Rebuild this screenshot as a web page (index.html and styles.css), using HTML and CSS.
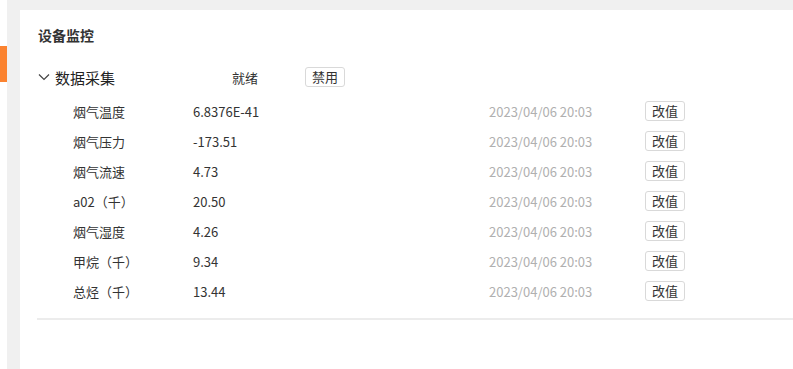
FILE: index.html
```html
<!doctype html>
<html lang="zh-CN">
  <head>
    <meta charset="UTF-8" />
    <meta name="viewport" content="width=device-width, initial-scale=1.0" />
    <title>设备监控</title>
    <link rel="stylesheet" href="styles.css">
  </head>
  <body>
    <div class="layout">
      <div class="sidebar">
        <div class="sidebar-active"></div>
      </div>
      <div class="main">
        <div class="panel">
          <h2 class="panel-title">设备监控</h2>
          <div class="collapse">
            <div class="collapse-header">
              <svg class="chevron" width="12" height="8" viewBox="0 0 12 8">
                <polyline points="1,1.5 6,6.5 11,1.5" fill="none" stroke="#444" stroke-width="1.2" />
              </svg>
              <span class="collapse-name">数据采集</span>
              <span class="collapse-status">就绪</span>
              <button class="btn">禁用</button>
            </div>
            <div class="rows">
              <div class="row">
                <span>烟气温度</span><span>6.8376E-41</span>
                <span class="time">2023/04/06 20:03</span><button class="btn">改值</button>
              </div>
              <div class="row">
                <span>烟气压力</span><span>-173.51</span>
                <span class="time">2023/04/06 20:03</span><button class="btn">改值</button>
              </div>
              <div class="row">
                <span>烟气流速</span><span>4.73</span>
                <span class="time">2023/04/06 20:03</span><button class="btn">改值</button>
              </div>
              <div class="row">
                <span>a02（千）</span><span>20.50</span>
                <span class="time">2023/04/06 20:03</span><button class="btn">改值</button>
              </div>
              <div class="row">
                <span>烟气湿度</span><span>4.26</span>
                <span class="time">2023/04/06 20:03</span><button class="btn">改值</button>
              </div>
              <div class="row">
                <span>甲烷（千）</span><span>9.34</span>
                <span class="time">2023/04/06 20:03</span><button class="btn">改值</button>
              </div>
              <div class="row">
                <span>总烃（千）</span><span>13.44</span>
                <span class="time">2023/04/06 20:03</span><button class="btn">改值</button>
              </div>
            </div>
          </div>
        </div>
      </div>
    </div>
  </body>
</html>
```

FILE: styles.css
```css
body {
  margin: 0;
  background-color: #f0f0f0;
  font-family: "Noto Sans CJK SC", "Liberation Sans", sans-serif;
  font-size: 13px;
  color: #333;
  overflow: hidden;
}
.layout {
  display: flex;
  height: 369px;
}
.sidebar {
  width: 7px;
  background: white;
  flex-shrink: 0;
}
.sidebar-active {
  margin-top: 46px;
  height: 36px;
  background-color: #fb8330;
}
.main {
  flex: 1;
  padding: 10px 0 0 13px;
}
.panel {
  background: white;
  height: 100%;
  padding-left: 17px;
}
.panel-title {
  margin: 0;
  padding: 15px 0 17px 1px;
  font-size: 14px;
  line-height: 20px;
  font-weight: bold;
  color: #333;
}
.collapse {
  border-bottom: 2px solid #ececec;
  padding-bottom: 12px;
}
.collapse-header {
  display: flex;
  align-items: center;
  height: 30px;
}
.chevron {
  margin-left: 1px;
  margin-right: 5px;
}
.collapse-name {
  font-size: 15px;
  width: 177px;
  color: #222;
}
.collapse-status {
  width: 73px;
}
.btn {
  font-family: inherit;
  font-size: 13px;
  color: #333;
  background: white;
  border: 1px solid #d9d9d9;
  border-radius: 3px;
  padding: 0 6px;
  height: 20px;
  line-height: 18px;
}
.rows {
  margin-top: 4px;
}
.row {
  display: grid;
  grid-template-columns: 120px 296px 156px auto;
  align-items: center;
  justify-items: start;
  height: 30px;
  padding-left: 36px;
}
.time {
  color: #b0b0b0;
}
```
